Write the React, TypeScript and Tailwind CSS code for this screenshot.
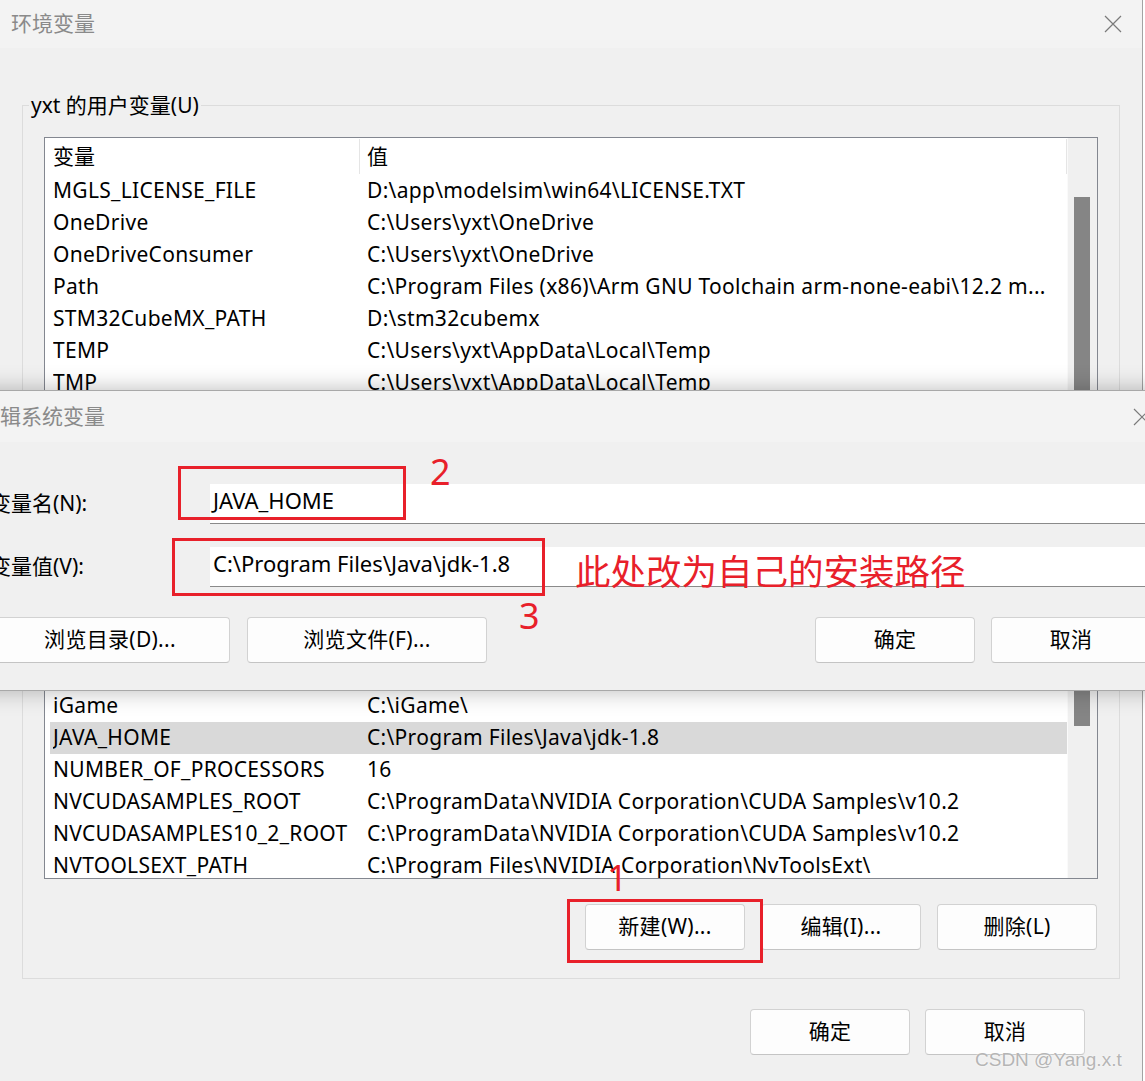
import React from 'react'

const font = 'font-["Noto_Sans","Noto_Sans_CJK_SC",sans-serif]'

type Row = { name: string; value: string }

const userRows: Row[] = [
  { name: 'MGLS_LICENSE_FILE', value: 'D:\\app\\modelsim\\win64\\LICENSE.TXT' },
  { name: 'OneDrive', value: 'C:\\Users\\yxt\\OneDrive' },
  { name: 'OneDriveConsumer', value: 'C:\\Users\\yxt\\OneDrive' },
  { name: 'Path', value: 'C:\\Program Files (x86)\\Arm GNU Toolchain arm-none-eabi\\12.2 m...' },
  { name: 'STM32CubeMX_PATH', value: 'D:\\stm32cubemx' },
  { name: 'TEMP', value: 'C:\\Users\\yxt\\AppData\\Local\\Temp' },
  { name: 'TMP', value: 'C:\\Users\\yxt\\AppData\\Local\\Temp' },
]

// rows above iGame sit under the edit dialog, so only their space is kept
const systemRows: Row[] = [
  { name: 'iGame', value: 'C:\\iGame\\' },
  { name: 'JAVA_HOME', value: 'C:\\Program Files\\Java\\jdk-1.8' },
  { name: 'NUMBER_OF_PROCESSORS', value: '16' },
  { name: 'NVCUDASAMPLES_ROOT', value: 'C:\\ProgramData\\NVIDIA Corporation\\CUDA Samples\\v10.2' },
  { name: 'NVCUDASAMPLES10_2_ROOT', value: 'C:\\ProgramData\\NVIDIA Corporation\\CUDA Samples\\v10.2' },
  { name: 'NVTOOLSEXT_PATH', value: 'C:\\Program Files\\NVIDIA Corporation\\NvToolsExt\\' },
]

function CloseIcon() {
  return (
    <svg width="18" height="18" viewBox="0 0 18 18" className="text-[#7a7a7a]">
      <path d="M1 1 L17 17 M17 1 L1 17" stroke="currentColor" strokeWidth="1.2" fill="none" />
    </svg>
  )
}

function WinButton({ label, className = '' }: { label: string; className?: string }) {
  return (
    <div
      className={`h-[46px] shrink-0 flex items-center justify-center bg-[#fdfdfd] border border-[#d2d2d2] border-b-[#c4c4c4] rounded-[4px] text-[21px] tracking-[0.3px] text-black whitespace-nowrap ${className}`}
    >
      {label}
    </div>
  )
}

function VarList({
  rows,
  heightClass,
  thumbClass,
  skipClass = '',
  selected,
}: {
  rows: Row[]
  heightClass: string
  thumbClass: string
  skipClass?: string
  selected?: string
}) {
  return (
    <div className={`w-[1054px] ${heightClass} ml-[21px] border border-[#838790] bg-white flex overflow-hidden`}>
      <div className="flex-1 flex flex-col pl-[5px] overflow-hidden">
        <div className="h-[37px] shrink-0 flex items-stretch text-[21px] text-black">
          <div className="w-[309px] pl-[3px] flex items-center">变量</div>
          <div className="w-px bg-[#e5e5e5] my-[1px]" />
          <div className="flex-1 pl-[7px] flex items-center">值</div>
          <div className="w-px bg-[#e5e5e5] my-[1px]" />
        </div>
        {skipClass && <div className={`shrink-0 ${skipClass}`} />}
        {rows.map((r) => (
          <div
            key={r.name}
            className={`h-[32px] shrink-0 flex items-center pl-[3px] text-[21px] tracking-[0.3px] text-black whitespace-nowrap ${
              selected === r.name ? 'bg-[#d9d9d9]' : ''
            }`}
          >
            <div className="w-[314px] shrink-0 overflow-hidden">{r.name}</div>
            <div className="flex-1 overflow-hidden">{r.value}</div>
          </div>
        ))}
      </div>
      <div className="w-[30px] shrink-0 bg-[#f0f0f0] border-l border-[#fafafa]">
        <div className={`ml-[6px] w-[16px] bg-[#858585] ${thumbClass}`} />
      </div>
    </div>
  )
}

export default function App() {
  return (
    <div className={`relative w-[1145px] h-[1081px] overflow-hidden bg-white ${font}`}>
      {/* 环境变量 window */}
      <div className="w-[1143px] h-[1081px] flex flex-col bg-[#f0f0f0] border-r border-[#a3a3a3]">
        <div className="h-[48px] shrink-0 bg-[#f3f3f3] flex items-center justify-between pl-[11px] pr-[20px]">
          <span className="text-[21px] text-[#8a8a8a]">环境变量</span>
          <CloseIcon />
        </div>

        <fieldset className="ml-[22px] mt-[43px] w-[1098px] border border-[#dcdcdc] pb-[14px]">
          <legend className="ml-[6px] px-[2px] text-[21px] leading-[28px] text-black">yxt 的用户变量(U)</legend>
          <div className="mt-[18px]">
            <VarList rows={userRows} heightClass="h-[283px]" thumbClass="mt-[59px] h-[300px]" />
          </div>
          <div className="mt-[12px] h-[46px]" />
        </fieldset>

        <div className="ml-[22px] mt-[16px] w-[1098px] border border-[#dcdcdc] pt-[14px] pb-[28px]">
          <VarList
            rows={systemRows}
            heightClass="h-[355px]"
            thumbClass="mt-[75px] h-[126px]"
            skipClass="h-[128px]"
            selected="JAVA_HOME"
          />
          <div className="mt-[25px] flex justify-end gap-[16px] pr-[22px]">
            <WinButton label="新建(W)..." className="w-[160px]" />
            <WinButton label="编辑(I)..." className="w-[160px]" />
            <WinButton label="删除(L)" className="w-[160px]" />
          </div>
        </div>

        <div className="mt-[30px] flex justify-end gap-[15px] pr-[57px]">
          <WinButton label="确定" className="w-[160px]" />
          <WinButton label="取消" className="w-[160px]" />
        </div>
      </div>

      {/* 编辑系统变量 dialog */}
      <div className="absolute left-[-60px] top-[390px] w-[1260px] h-[301px] flex flex-col bg-[#f0f0f0] border border-[#a8a8a8] shadow-[0_0_22px_rgba(0,0,0,0.28)]">
        <div className="h-[51px] shrink-0 bg-[#f3f3f3] flex items-center justify-between pl-[38px] pr-[48px]">
          <span className="text-[21px] text-[#8a8a8a]">编辑系统变量</span>
          <CloseIcon />
        </div>
        <div className="flex flex-col pl-[49px]">
          <div className="mt-[42px] h-[40px] flex items-center">
            <div className="w-[220px] text-[21px] text-black whitespace-nowrap">变量名(N):</div>
            <div className="flex-1 h-full bg-white border-b border-[#8a8a8a] flex items-center pl-[3px] pb-[6px] text-[22px] text-black">
              JAVA_HOME
            </div>
          </div>
          <div className="mt-[23px] h-[40px] flex items-center">
            <div className="w-[220px] text-[21px] text-black whitespace-nowrap">变量值(V):</div>
            <div className="flex-1 h-full bg-white border-b border-[#8a8a8a] flex items-center pl-[3px] pb-[6px] text-[22px] text-black">
              C:\Program Files\Java\jdk-1.8
            </div>
          </div>
          <div className="mt-[30px] flex">
            <WinButton label="浏览目录(D)..." className="w-[240px]" />
            <WinButton label="浏览文件(F)..." className="w-[240px] ml-[17px]" />
            <WinButton label="确定" className="w-[160px] ml-[328px]" />
            <WinButton label="取消" className="w-[160px] ml-[16px]" />
          </div>
        </div>
      </div>

      {/* red annotations */}
      <div className="absolute left-[178px] top-[466px] w-[228px] h-[54px] border-[3px] border-[#e8202a]" />
      <div className="absolute left-[430px] top-[448px] text-[36px] leading-[48px] text-[#e8202a]">2</div>
      <div className="absolute left-[172px] top-[538px] w-[373px] h-[58px] border-[3px] border-[#e8202a]" />
      <div className="absolute left-[519px] top-[592px] text-[36px] leading-[48px] text-[#e8202a]">3</div>
      <div className="absolute left-[575px] top-[547px] text-[35.5px] leading-[48px] text-[#e8202a] whitespace-nowrap">
        此处改为自己的安装路径
      </div>
      <div className="absolute left-[567px] top-[899px] w-[196px] h-[64px] border-[3px] border-[#e8202a]" />
      <div className="absolute left-[607px] top-[854px] text-[36px] leading-[48px] text-[#e8202a]">1</div>

      {/* watermark */}
      <div className='absolute left-[975px] top-[1046px] text-[19px] text-[#b5b5b5] font-["Liberation_Sans",sans-serif] [text-shadow:0_0_2px_#ffffff]'>
        CSDN @Yang.x.t
      </div>
    </div>
  )
}
